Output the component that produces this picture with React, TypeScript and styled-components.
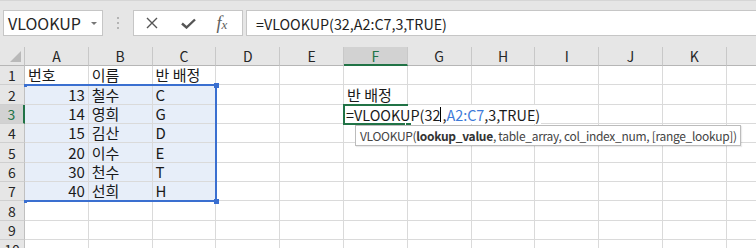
import { createGlobalStyle, styled } from "styled-components";

const COL_W = 63.8;
const ROW_H = 19.35;
const HEAD_H = 19;
const ROWHEAD_W = 25;
// the last column is only partly on screen, its letter falls outside
const COLS = ["A", "B", "C", "D", "E", "F", "G", "H", "I", "J", "K", ""];
const GREEN = "#217346";
const BLUE = "#3a6fd0";

const GlobalStyle = createGlobalStyle`
  html, body {
    margin: 0;
    padding: 0;
    background: #fff;
    overflow: hidden;
  }
  body {
    font-family: "Noto Sans CJK KR", "Noto Sans", sans-serif;
  }
`;

const Page = styled.div`
  width: 756px;
  height: 248px;
  overflow: hidden;
`;

const Toolbar = styled.div`
  box-sizing: border-box;
  height: 47px;
  background: #e6e6e6;
  border-top: 1px solid #d6d6d6;
  display: flex;
  align-items: flex-start;
  padding: 9px 0 0 3px;
`;

const NameBox = styled.div`
  box-sizing: border-box;
  width: 100px;
  height: 26px;
  background: #fff;
  border: 1px solid #c6c6c6;
  display: flex;
  align-items: center;
  justify-content: space-between;
  padding: 0 5px 0 4px;
  font-size: 16px;
  color: #262626;
`;

const DropArrow = styled.span`
  width: 0;
  height: 0;
  border-left: 3px solid transparent;
  border-right: 3px solid transparent;
  border-top: 3px solid #777;
`;

const Grip = styled.div`
  width: 30px;
  height: 26px;
  display: flex;
  flex-direction: column;
  align-items: center;
  justify-content: center;
  gap: 3px;
`;

const GripDot = styled.span`
  width: 2px;
  height: 2px;
  background: #b4b4b4;
`;

const FxBox = styled.div`
  box-sizing: border-box;
  width: 110px;
  height: 26px;
  background: #fff;
  border: 1px solid #c6c6c6;
  display: flex;
`;

const FxSlot = styled.div`
  width: 36px;
  height: 100%;
  display: flex;
  align-items: center;
  justify-content: center;
  color: #555;
`;

const FxGlyph = styled.span`
  font-family: "Liberation Serif", serif;
  font-style: italic;
  font-size: 18px;
  color: #5e5e5e;
  margin-left: -4px;
  & small {
    font-size: 13px;
  }
`;

const FormulaInput = styled.div`
  box-sizing: border-box;
  flex: 1;
  height: 26px;
  margin: 0 -2px 0 3px;
  background: #fff;
  border: 1px solid #c6c6c6;
  display: flex;
  align-items: center;
  padding-left: 9px;
  font-size: 14.3px;
  color: #1e1e1e;
`;

const Sheet = styled.div`
  position: relative;
  display: grid;
  grid-template-columns: ${ROWHEAD_W}px repeat(${COLS.length}, ${COL_W}px);
  grid-template-rows: ${HEAD_H}px repeat(10, ${ROW_H}px);
`;

const Corner = styled.div`
  position: relative;
  box-sizing: border-box;
  background: #e6e6e6;
  border-right: 1px solid #c4c4c4;
  border-bottom: 1px solid #b6b6b6;
  &::after {
    content: "";
    position: absolute;
    right: 3px;
    bottom: 3px;
    border-left: 11px solid transparent;
    border-bottom: 11px solid #b9b9b9;
  }
`;

const ColHeader = styled.div<{ $active?: boolean }>`
  box-sizing: border-box;
  background: ${(p) => (p.$active ? "#d2d2d2" : "#e6e6e6")};
  border-right: 1px solid #c8c8c8;
  border-bottom: ${(p) => (p.$active ? `2px solid ${GREEN}` : "1px solid #b6b6b6")};
  display: flex;
  align-items: center;
  justify-content: center;
  font-size: 14px;
  color: ${(p) => (p.$active ? GREEN : "#262626")};
`;

const RowHeader = styled.div<{ $active?: boolean }>`
  box-sizing: border-box;
  background: ${(p) => (p.$active ? "#d2d2d2" : "#e6e6e6")};
  border-right: ${(p) => (p.$active ? `2px solid ${GREEN}` : "1px solid #c0c0c0")};
  border-bottom: 1px solid #cfcfcf;
  display: flex;
  align-items: center;
  justify-content: center;
  font-size: 14px;
  color: ${(p) => (p.$active ? GREEN : "#262626")};
`;

const Cell = styled.div<{ $sel?: boolean; $right?: boolean }>`
  box-sizing: border-box;
  border-right: 1px solid #dadada;
  border-bottom: 1px solid #dadada;
  background: ${(p) => (p.$sel ? "#e7eef9" : "#fff")};
  display: flex;
  align-items: flex-end;
  justify-content: ${(p) => (p.$right ? "flex-end" : "flex-start")};
  padding: 0 3px 0 3px;
  font-size: 15px;
  line-height: 18px;
  color: #1a1a1a;
  white-space: nowrap;
`;

const SelectionFrame = styled.div`
  position: absolute;
  box-sizing: border-box;
  left: ${ROWHEAD_W - 1}px;
  top: ${HEAD_H + ROW_H - 1}px;
  width: ${3 * COL_W + 1.5}px;
  height: ${6 * ROW_H + 2}px;
  border: 2px solid ${BLUE};
  border-left: none;
  pointer-events: none;
`;

const Handle = styled.span<{ $x: number; $y: number; $s: number }>`
  position: absolute;
  left: ${(p) => p.$x - p.$s / 2}px;
  top: ${(p) => p.$y - p.$s / 2}px;
  width: ${(p) => p.$s}px;
  height: ${(p) => p.$s}px;
  background: ${BLUE};
`;

const EditBox = styled.div`
  position: absolute;
  box-sizing: border-box;
  left: ${ROWHEAD_W + 5 * COL_W}px;
  top: ${HEAD_H + 2 * ROW_H}px;
  width: 197px;
  height: ${ROW_H}px;
  background: #fff;
  display: flex;
  align-items: flex-end;
  padding: 0 0 0 2px;
  font-size: 14.4px;
  line-height: 18px;
  color: #1a1a1a;
  white-space: nowrap;
`;

const RefText = styled.span`
  color: #3d7ad9;
`;

const Caret = styled.span`
  flex: none;
  width: 1px;
  height: 15px;
  margin: 0 1px 2px 0;
  background: #000;
`;

const ActiveFrame = styled.div`
  position: absolute;
  box-sizing: border-box;
  left: ${ROWHEAD_W + 5 * COL_W - 1}px;
  top: ${HEAD_H + 2 * ROW_H - 1}px;
  width: ${COL_W + 1}px;
  height: ${ROW_H + 2}px;
  border: 2px solid ${GREEN};
  border-right: none;
`;

const FillHandle = styled.span`
  position: absolute;
  left: ${ROWHEAD_W + 6 * COL_W - 3}px;
  top: ${HEAD_H + 3 * ROW_H - 2}px;
  width: 5px;
  height: 5px;
  background: ${GREEN};
  border: 1px solid #fff;
`;

const Tooltip = styled.div`
  position: absolute;
  box-sizing: border-box;
  left: 355px;
  top: 78px;
  width: 386px;
  height: 21px;
  padding: 0 4px;
  background: #fff;
  border: 1px solid #bcbcbc;
  box-shadow: 1px 1px 1px rgba(0, 0, 0, 0.08);
  display: flex;
  align-items: center;
  font-family: "Noto Sans CJK KR", "Noto Sans", sans-serif;
  font-size: 12px;
  letter-spacing: -0.3px;
  color: #444;
  white-space: nowrap;
  & b {
    color: #333;
  }
`;

type Entry = { text: string; right?: boolean };

const data: Record<number, Record<string, Entry>> = {
  1: { A: { text: "번호" }, B: { text: "이름" }, C: { text: "반 배정" } },
  2: { A: { text: "13", right: true }, B: { text: "철수" }, C: { text: "C" }, F: { text: "반 배정" } },
  3: { A: { text: "14", right: true }, B: { text: "영희" }, C: { text: "G" } },
  4: { A: { text: "15", right: true }, B: { text: "김산" }, C: { text: "D" } },
  5: { A: { text: "20", right: true }, B: { text: "이수" }, C: { text: "E" } },
  6: { A: { text: "30", right: true }, B: { text: "천수" }, C: { text: "T" } },
  7: { A: { text: "40", right: true }, B: { text: "선희" }, C: { text: "H" } },
};

const rows = [1, 2, 3, 4, 5, 6, 7, 8, 9, 10];

export default function App() {
  const selTop = HEAD_H + ROW_H;
  const selBottom = HEAD_H + 7 * ROW_H;
  const selRight = ROWHEAD_W + 3 * COL_W;

  return (
    <Page>
      <GlobalStyle />
      <Toolbar>
        <NameBox>
          VLOOKUP
          <DropArrow />
        </NameBox>
        <Grip>
          <GripDot />
          <GripDot />
          <GripDot />
        </Grip>
        <FxBox>
          <FxSlot>
            <svg width="12" height="12" viewBox="0 0 12 12">
              <path d="M1 1L11 11M11 1L1 11" stroke="#555" strokeWidth="1.4" fill="none" />
            </svg>
          </FxSlot>
          <FxSlot>
            <svg width="15" height="11" viewBox="0 0 15 11">
              <path d="M1 5.5L5.5 9.5L14 1.5" stroke="#555" strokeWidth="2.4" fill="none" />
            </svg>
          </FxSlot>
          <FxSlot>
            <FxGlyph>
              f<small>x</small>
            </FxGlyph>
          </FxSlot>
        </FxBox>
        <FormulaInput>=VLOOKUP(32,A2:C7,3,TRUE)</FormulaInput>
      </Toolbar>

      <Sheet>
        <Corner />
        {COLS.map((c, ci) => (
          <ColHeader key={`c${ci}`} $active={c === "F"}>
            {c}
          </ColHeader>
        ))}
        {rows.map((r) => [
          <RowHeader key={`h${r}`} $active={r === 3}>
            {r}
          </RowHeader>,
          ...COLS.map((c, ci) => {
            const e = data[r]?.[c];
            return (
              <Cell key={`${ci}-${r}`} $sel={r >= 2 && r <= 7 && ci <= 2} $right={e?.right}>
                {e?.text}
              </Cell>
            );
          }),
        ])}

        <SelectionFrame />
        <Handle $x={selRight} $y={selTop} $s={5} />
        <Handle $x={selRight} $y={selBottom} $s={5} />
        <Handle $x={ROWHEAD_W} $y={selTop} $s={3} />
        <Handle $x={ROWHEAD_W} $y={selBottom} $s={3} />

        <EditBox>
          <span>=VLOOKUP(32</span>
          <Caret />
          <span>
            ,<RefText>A2:C7</RefText>,3,TRUE)
          </span>
        </EditBox>
        <ActiveFrame />
        <FillHandle />

        <Tooltip>
          VLOOKUP(<b>lookup_value</b>, table_array, col_index_num, [range_lookup])
        </Tooltip>
      </Sheet>
    </Page>
  );
}
